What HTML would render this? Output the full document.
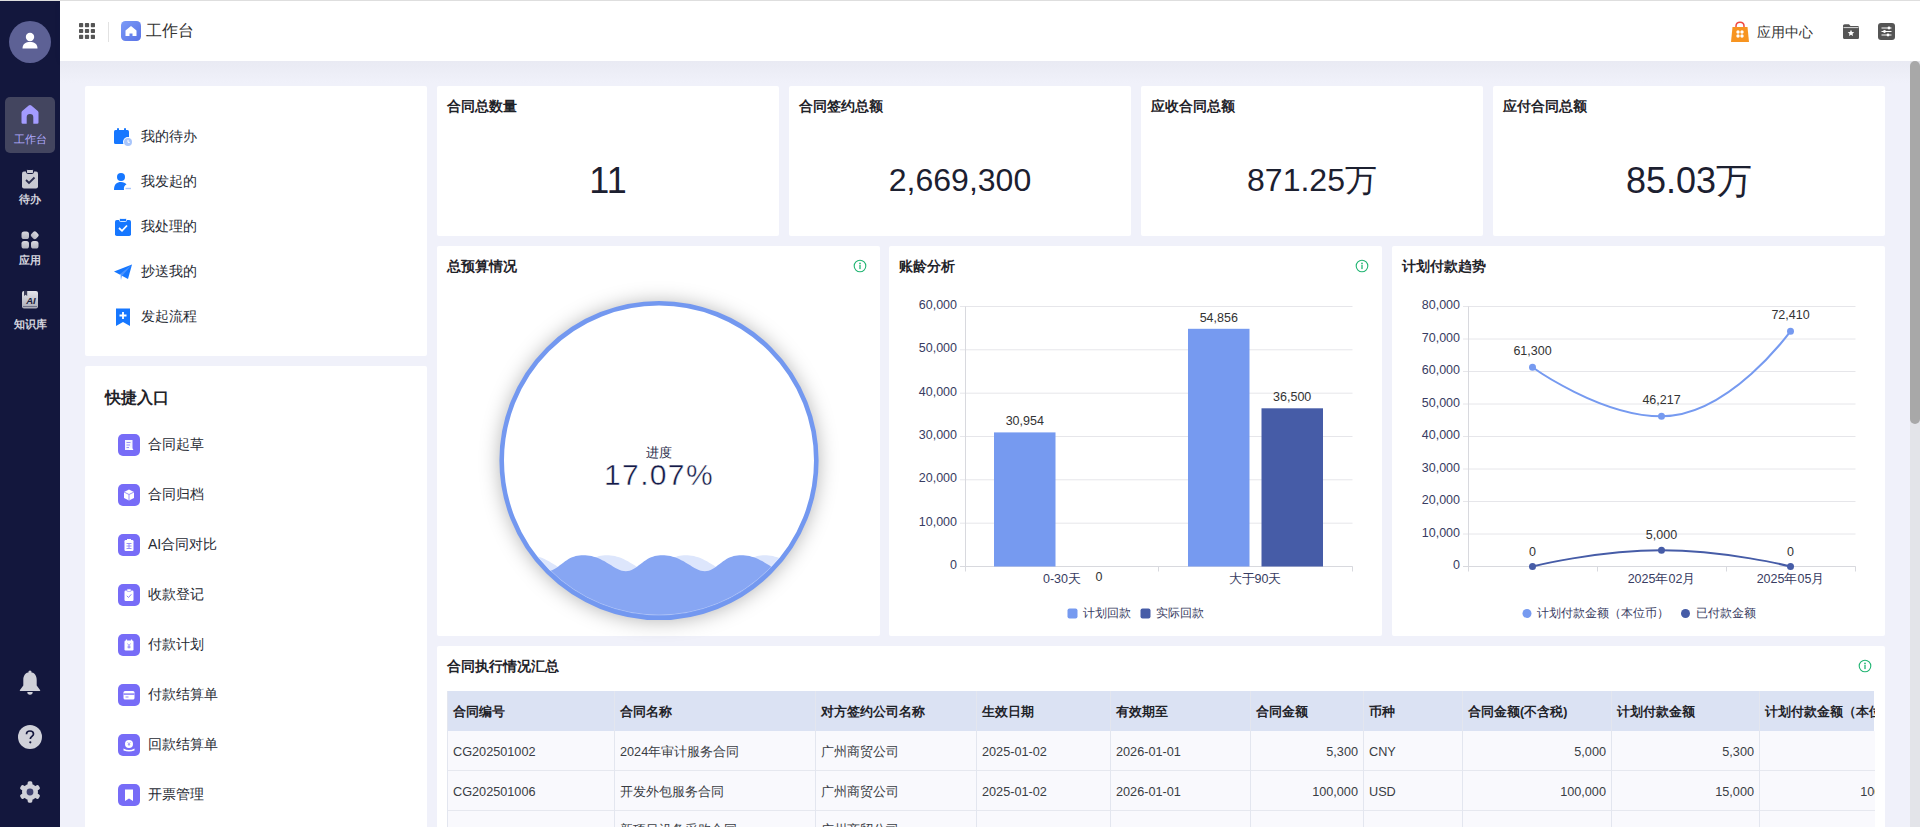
<!DOCTYPE html>
<html><head><meta charset="utf-8"><title>工作台</title>
<style>
*{box-sizing:border-box;margin:0;padding:0}
html,body{width:1920px;height:827px;overflow:hidden;background:#f0f1fa;font-family:"Liberation Sans",sans-serif;color:#1f2329}
.abs{position:absolute}
#side{position:absolute;left:0;top:0;width:60px;height:827px;background:#13173d}
#side .av{position:absolute;left:9px;top:21px;width:42px;height:42px;border-radius:50%;background:#5d6195}
#side .nav{position:absolute;left:0;width:60px;text-align:center;font-size:11px;font-weight:bold;color:#d3d4de}
#side .act{position:absolute;left:5px;top:97px;width:50px;height:56px;border-radius:5px;background:#43455f}
#top{position:absolute;left:60px;top:0;width:1860px;height:61px;background:#fff;border-top:1px solid #dedede;box-shadow:0 1px 6px rgba(40,50,90,0.06)}
.card{position:absolute;background:#fff;border-radius:2px}
.ct{position:absolute;left:10px;top:12px;font-size:13.5px;font-weight:bold;color:#1f2329}
.num{position:absolute;left:0;right:0;top:76px;text-align:center;font-size:32px;color:#1c2030}
.li{position:absolute;left:28px;height:20px;display:flex;align-items:center}
.li svg{flex:none}
.li span{margin-left:8px;font-size:14px;color:#262a33}
.qi{position:absolute;left:33px;height:22px;display:flex;align-items:center}
.qi svg{flex:none}
.qi span{margin-left:8px;font-size:14px;color:#262a33}
.th{position:absolute;top:1px;height:39px;line-height:41px;padding-left:6px;font-size:12.5px;font-weight:bold;color:#1f2329;white-space:nowrap;overflow:hidden}
.tr{position:absolute;left:0;width:1428px;height:40px;background:#f9f9fd;border-bottom:1px solid #e6e8ef}
.td{position:absolute;height:40px;line-height:42px;padding-left:6px;padding-right:5px;font-size:12.7px;color:#3a3d44;white-space:nowrap;overflow:hidden}
.td.r{text-align:right}
.vl{position:absolute;top:0;width:1px;height:200px;background:#e3e6ef}
</style></head><body>
<div id="side">
  <div class="av"></div>
  <svg class="abs" style="left:20px;top:31px" width="20" height="20" viewBox="0 0 20 20"><circle cx="10" cy="6" r="4.2" fill="#fff"/><path d="M2.5 17.5 C2.5 12.5 6 11 10 11 C14 11 17.5 12.5 17.5 17.5 Z" fill="#fff"/></svg>
  <div class="act"></div>
  <svg class="abs" style="left:20px;top:104px" width="20" height="21" viewBox="0 0 20 21"><path d="M1.5 8.6 Q1.5 7.7 2.2 7.1 L8.7 1.6 Q10 0.6 11.3 1.6 L17.8 7.1 Q18.5 7.7 18.5 8.6 V18.5 Q18.5 19.8 17.2 19.8 H13.3 V13.2 A3.3 3.3 0 0 0 6.7 13.2 V19.8 H2.8 Q1.5 19.8 1.5 18.5 Z" fill="#a39bff"/></svg>
  <div class="nav" style="top:132px;color:#b0aaff;font-weight:normal">工作台</div>
  <svg class="abs" style="left:21px;top:169px" width="18" height="20" viewBox="0 0 18 20"><rect x="1" y="2.5" width="16" height="17" rx="2" fill="#c9cad3"/><rect x="5.5" y="0.5" width="7" height="4" rx="1.2" fill="#c9cad3" stroke="#13173d" stroke-width="1"/><path d="M5 11 L8 14 L13.5 8.5" stroke="#2a2d4f" stroke-width="1.8" fill="none"/></svg>
  <div class="nav" style="top:192px">待办</div>
  <svg class="abs" style="left:21px;top:231px" width="18" height="18" viewBox="0 0 18 18"><defs><linearGradient id="gg" x1="0" y1="0" x2="0" y2="1"><stop offset="0" stop-color="#d9d9e0"/><stop offset="1" stop-color="#b4b5c0"/></linearGradient></defs><rect x="0.5" y="0.5" width="7.5" height="7.5" rx="2.6" fill="url(#gg)"/><rect x="10.4" y="0.9" width="6.7" height="6.7" rx="2.2" fill="url(#gg)" transform="rotate(45 13.75 4.25)"/><rect x="0.5" y="10" width="7.5" height="7.5" rx="2.6" fill="url(#gg)"/><rect x="10" y="10" width="7.5" height="7.5" rx="2.6" fill="url(#gg)"/></svg>
  <div class="nav" style="top:253px">应用</div>
  <svg class="abs" style="left:21px;top:290px" width="18" height="19" viewBox="0 0 18 19"><defs><linearGradient id="bg2" x1="0" y1="0" x2="0" y2="1"><stop offset="0" stop-color="#e4e4ea"/><stop offset="1" stop-color="#a9aab6"/></linearGradient></defs><rect x="1" y="1" width="16" height="17.5" rx="2" fill="url(#bg2)"/><path d="M3 0.8 V6 L4.6 4.8 L6.2 6 V0.8 Z" fill="#3a3c58"/><rect x="2" y="16" width="14" height="1" fill="#6e7088"/><text x="10" y="14.2" font-size="9.5" font-weight="bold" font-style="italic" fill="#1c1e3c" text-anchor="middle">AI</text></svg>
  <div class="nav" style="top:317px">知识库</div>
  <svg class="abs" style="left:19px;top:670px" width="22" height="26" viewBox="0 0 22 26"><circle cx="11" cy="2" r="1.6" fill="#d0d1d9"/><path d="M11 2.2 C6.3 2.2 4.3 5.8 4.3 9.8 V15.5 L0.8 20.2 Q0.5 21 1.4 21 H20.6 Q21.5 21 21.2 20.2 L17.7 15.5 V9.8 C17.7 5.8 15.7 2.2 11 2.2 Z" fill="#d0d1d9"/><path d="M8.3 22 A2.7 2.7 0 0 0 13.7 22 Z" fill="#d0d1d9"/></svg>
  <svg class="abs" style="left:18px;top:725px" width="24" height="24" viewBox="0 0 24 24"><circle cx="12" cy="12" r="12" fill="#d0d1d9"/><path d="M8.5 9.3 C8.5 7.2 10 6 12 6 C14 6 15.5 7.2 15.5 9 C15.5 11.3 12.3 11.5 12.3 14" stroke="#13173d" stroke-width="1.7" fill="none"/><circle cx="12.3" cy="17.3" r="1.1" fill="#13173d"/></svg>
  <svg class="abs" style="left:19px;top:780.5px" width="22" height="22" viewBox="0 0 22 22"><circle cx="11" cy="11" r="8" fill="#d0d1d9"/><rect x="8.6" y="0.3" width="4.8" height="6" rx="1.6" fill="#d0d1d9" transform="rotate(0 11 11)"/><rect x="8.6" y="0.3" width="4.8" height="6" rx="1.6" fill="#d0d1d9" transform="rotate(60 11 11)"/><rect x="8.6" y="0.3" width="4.8" height="6" rx="1.6" fill="#d0d1d9" transform="rotate(120 11 11)"/><rect x="8.6" y="0.3" width="4.8" height="6" rx="1.6" fill="#d0d1d9" transform="rotate(180 11 11)"/><rect x="8.6" y="0.3" width="4.8" height="6" rx="1.6" fill="#d0d1d9" transform="rotate(240 11 11)"/><rect x="8.6" y="0.3" width="4.8" height="6" rx="1.6" fill="#d0d1d9" transform="rotate(300 11 11)"/><circle cx="11" cy="11" r="3.4" fill="#3f4270"/></svg>
</div>
<div id="top">
  <svg class="abs" style="left:19px;top:22px" width="16" height="16" viewBox="0 0 16 16" fill="#555"><rect x="0" y="0" width="4.2" height="4.2" rx="0.8"/><rect x="5.9" y="0" width="4.2" height="4.2" rx="0.8"/><rect x="11.8" y="0" width="4.2" height="4.2" rx="0.8"/><rect x="0" y="5.9" width="4.2" height="4.2" rx="0.8"/><rect x="5.9" y="5.9" width="4.2" height="4.2" rx="0.8"/><rect x="11.8" y="5.9" width="4.2" height="4.2" rx="0.8"/><rect x="0" y="11.8" width="4.2" height="4.2" rx="0.8"/><rect x="5.9" y="11.8" width="4.2" height="4.2" rx="0.8"/><rect x="11.8" y="11.8" width="4.2" height="4.2" rx="0.8"/></svg>
  <div class="abs" style="left:48px;top:21px;width:1px;height:20px;background:#e2e2e2"></div>
  <svg class="abs" style="left:61px;top:20px" width="20" height="20" viewBox="0 0 20 20"><defs><linearGradient id="hg" x1="0" y1="0" x2="1" y2="1"><stop offset="0" stop-color="#7b9bf7"/><stop offset="1" stop-color="#5a73e6"/></linearGradient></defs><rect width="20" height="20" rx="4.5" fill="url(#hg)"/><path d="M4.5 9.5 L10 5 L15.5 9.5 V15 H11.5 V12.5 H8.5 V15 H4.5 Z" fill="#fff"/></svg>
  <div class="abs" style="left:86px;top:20px;font-size:16px;color:#333;line-height:20px">工作台</div>
  <svg class="abs" style="left:1670px;top:20px" width="20" height="22" viewBox="0 0 20 22"><path d="M6 7 V5 C6 2.5 7.8 1.2 10 1.2 C12.2 1.2 14 2.5 14 5 V7" stroke="#f0483e" stroke-width="1.5" fill="none"/><path d="M2.5 6 H17.5 L19 21 H1 Z" fill="#f79420"/><circle cx="8" cy="11" r="1.7" fill="#fff"/><circle cx="12" cy="11" r="1.7" fill="#fff"/><circle cx="8" cy="15" r="1.7" fill="#fff"/><circle cx="12" cy="15" r="1.7" fill="#fff"/></svg>
  <div class="abs" style="left:1697px;top:23px;font-size:13.5px;color:#333;line-height:18px">应用中心</div>
  <svg class="abs" style="left:1782px;top:22px" width="18" height="17" viewBox="0 0 18 17"><path d="M1 3 C1 2 1.7 1.2 2.7 1.2 H7 L8.5 3 H15.5 C16.5 3 17 3.7 17 4.5 V14.5 C17 15.5 16.3 16 15.5 16 H2.5 C1.5 16 1 15.3 1 14.5 Z" fill="#555"/><path d="M1.5 4.6 H16.5" stroke="#fff" stroke-width="0.8"/><path d="M9 6.8 L10 9 L12.3 9.2 L10.5 10.7 L11.1 13 L9 11.7 L6.9 13 L7.5 10.7 L5.7 9.2 L8 9 Z" fill="#fff"/></svg>
  <svg class="abs" style="left:1818px;top:22px" width="17" height="17" viewBox="0 0 17 17"><rect width="17" height="17" rx="3" fill="#555"/><path d="M3.5 5 H13.5 M3.5 8.5 H13.5 M3.5 12 H13.5" stroke="#fff" stroke-width="1"/><circle cx="11" cy="5" r="1.4" fill="#fff"/><circle cx="6.5" cy="8.5" r="1.4" fill="#fff"/><circle cx="10" cy="12" r="1.4" fill="#fff"/></svg>
</div>
<div class="abs" style="left:0;top:0;width:1920px;height:1px;background:#dedede"></div>
<div class="abs" style="left:60px;top:61px;width:1850px;height:22px;background:linear-gradient(#e9eaf3,#f0f1fa)"></div>
<!-- scrollbar -->
<div class="abs" style="left:1910px;top:61px;width:10px;height:766px;background:#e3e4e9"></div>
<div class="abs" style="left:1910px;top:61px;width:10px;height:363px;background:#a8a8a8;border-radius:5px 5px 5px 5px"></div>

<!-- left panels -->
<div class="card" style="left:85px;top:86px;width:342px;height:270px"><div class="li" style="top:41px"><svg width="20" height="20" viewBox="0 0 20 20"><rect x="1" y="3" width="15" height="14" rx="1.5" fill="#1677ff"/><rect x="4" y="1" width="2" height="4" rx="1" fill="#1677ff"/><rect x="11" y="1" width="2" height="4" rx="1" fill="#1677ff"/><circle cx="15" cy="15" r="5" fill="#fff"/><circle cx="15" cy="15" r="4" fill="#a9c6fb"/><path d="M15 12.8V15.3H16.8" stroke="#fff" stroke-width="1" fill="none"/></svg><span>我的待办</span></div><div class="li" style="top:86px"><svg width="20" height="20" viewBox="0 0 20 20"><circle cx="8" cy="5" r="4" fill="#1677ff"/><path d="M1 18 C1 12 4 10 8 10 C10.5 10 12.5 11 13.5 12.5 C11.5 13.2 10.5 15.5 11 18 Z" fill="#1677ff"/><path d="M12.5 16.5 H18" stroke="#a9c6fb" stroke-width="1.4"/></svg><span>我发起的</span></div><div class="li" style="top:131px"><svg width="20" height="20" viewBox="0 0 20 20"><rect x="2" y="3" width="16" height="16" rx="1.8" fill="#1677ff"/><rect x="6.5" y="1.5" width="7" height="3" rx="1" fill="#1677ff" stroke="#fff" stroke-width="0.8"/><path d="M6 11 L9 13.8 L14 8.5" stroke="#fff" stroke-width="1.8" fill="none"/></svg><span>我处理的</span></div><div class="li" style="top:176px"><svg width="20" height="20" viewBox="0 0 20 20"><path d="M1 9.5 L19 2.5 L15 17 Z" fill="#1677ff"/><path d="M7 12 L19 2.5 L9 14 L8 18 Z" fill="#4b93ff"/><path d="M7.5 12.5 L8.2 17.5" stroke="#fff" stroke-width="0.6"/></svg><span>抄送我的</span></div><div class="li" style="top:221px"><svg width="20" height="20" viewBox="0 0 20 20"><path d="M3 1.5 H17 V19 L10 15 L3 19 Z" fill="#1677ff"/><path d="M10 5 V12 M6.5 8.5 H13.5" stroke="#fff" stroke-width="1.8"/></svg><span>发起流程</span></div></div>
<div class="card" style="left:85px;top:366px;width:342px;height:470px">
  <div class="abs" style="left:20px;top:22px;font-size:16px;font-weight:bold;color:#1f2329">快捷入口</div>
  <div class="qi" style="top:68px"><svg width="22" height="22" viewBox="0 0 22 22"><rect width="22" height="22" rx="5" fill="#776cf7"/><rect x="7" y="6" width="7.5" height="10" fill="#fff" opacity="0.92"/><path d="M8.5 8.5h4M8.5 11h3.5M8.5 13.5h2.5" stroke="#8f86f8" stroke-width="0.9"/><path d="M13 13l2.5 3h-5z" fill="#fff"/></svg><span>合同起草</span></div><div class="qi" style="top:118px"><svg width="22" height="22" viewBox="0 0 22 22"><rect width="22" height="22" rx="5" fill="#776cf7"/><path d="M11 5.5 L16 8 V14 L11 16.5 L6 14 V8 Z" fill="#fff"/><path d="M6 8 L11 10.5 L16 8 M11 10.5 V16.5" stroke="#8f86f8" stroke-width="0.9" fill="none"/></svg><span>合同归档</span></div><div class="qi" style="top:168px"><svg width="22" height="22" viewBox="0 0 22 22"><rect width="22" height="22" rx="5" fill="#776cf7"/><rect x="6.5" y="6" width="9" height="11" rx="1.2" fill="#fff"/><path d="M8.5 9.5h5M8.5 12h5M8.5 14.5h5M11 9.5v5" stroke="#8f86f8" stroke-width="0.9"/><rect x="9" y="5" width="4" height="2" fill="#fff"/></svg><span>AI合同对比</span></div><div class="qi" style="top:218px"><svg width="22" height="22" viewBox="0 0 22 22"><rect width="22" height="22" rx="5" fill="#776cf7"/><rect x="6.5" y="6.5" width="9" height="10.5" rx="1.2" fill="#fff"/><rect x="9" y="5" width="4" height="2.5" rx="0.6" fill="#fff" stroke="#8f86f8" stroke-width="0.6"/><path d="M8.8 11.8 L10.5 13.5 L13.3 10.3" stroke="#8f86f8" stroke-width="1" fill="none"/></svg><span>收款登记</span></div><div class="qi" style="top:268px"><svg width="22" height="22" viewBox="0 0 22 22"><rect width="22" height="22" rx="5" fill="#776cf7"/><rect x="6.5" y="6.5" width="9" height="10" rx="1.2" fill="#fff"/><path d="M8.5 5.5v2.5M13.5 5.5v2.5" stroke="#fff" stroke-width="1.2"/><path d="M9.5 9.5 L11 11.5 L12.5 9.5 M11 11.5 V14.5 M9.5 12.3 H12.5 M9.5 13.6 H12.5" stroke="#8f86f8" stroke-width="0.8" fill="none"/></svg><span>付款计划</span></div><div class="qi" style="top:318px"><svg width="22" height="22" viewBox="0 0 22 22"><rect width="22" height="22" rx="5" fill="#776cf7"/><rect x="5.5" y="7" width="11" height="8.5" rx="1.5" fill="#fff"/><rect x="5.5" y="9.3" width="11" height="1.6" fill="#8f86f8"/><rect x="7.5" y="12.5" width="3" height="1" fill="#8f86f8"/></svg><span>付款结算单</span></div><div class="qi" style="top:368px"><svg width="22" height="22" viewBox="0 0 22 22"><rect width="22" height="22" rx="5" fill="#776cf7"/><circle cx="11" cy="10" r="4" fill="#fff"/><path d="M9.6 8.2 L11 10 L12.4 8.2 M11 10 V12 M9.8 10.5 H12.2" stroke="#8f86f8" stroke-width="0.7" fill="none"/><path d="M5.5 14.5 Q11 17.5 16.5 14.5 V16.5 Q11 18.5 5.5 16.5 Z" fill="#fff"/></svg><span>回款结算单</span></div><div class="qi" style="top:418px"><svg width="22" height="22" viewBox="0 0 22 22"><rect width="22" height="22" rx="5" fill="#776cf7"/><path d="M7 5.5 H15 V17 L11 14.5 L7 17 Z" fill="#fff"/></svg><span>开票管理</span></div>
</div>

<!-- stat cards -->
<div class="card" style="left:437px;top:86px;width:342px;height:150px"><div class="ct">合同总数量</div></div>
<div class="card" style="left:789px;top:86px;width:342px;height:150px"><div class="ct">合同签约总额</div></div>
<div class="card" style="left:1141px;top:86px;width:342px;height:150px"><div class="ct">应收合同总额</div></div>
<div class="card" style="left:1493px;top:86px;width:392px;height:150px"><div class="ct">应付合同总额</div></div>

<!-- chart cards -->
<div class="card" style="left:437px;top:246px;width:443px;height:390px"><div class="ct">总预算情况</div><div class="abs" style="left:416px;top:13px"><svg width="14" height="14" viewBox="0 0 14 14"><circle cx="7" cy="7" r="5.8" fill="none" stroke="#22b573" stroke-width="1.1"/><circle cx="7" cy="4.4" r="0.85" fill="#22b573"/><rect x="6.35" y="5.9" width="1.3" height="4.2" fill="#22b573"/></svg></div></div>
<div class="card" style="left:889px;top:246px;width:493px;height:390px"><div class="ct">账龄分析</div><div class="abs" style="left:466px;top:13px"><svg width="14" height="14" viewBox="0 0 14 14"><circle cx="7" cy="7" r="5.8" fill="none" stroke="#22b573" stroke-width="1.1"/><circle cx="7" cy="4.4" r="0.85" fill="#22b573"/><rect x="6.35" y="5.9" width="1.3" height="4.2" fill="#22b573"/></svg></div></div>
<div class="card" style="left:1392px;top:246px;width:493px;height:390px"><div class="ct">计划付款趋势</div></div>

<!-- table card -->
<div class="card" style="left:437px;top:646px;width:1448px;height:200px">
  <div class="ct" style="top:12px">合同执行情况汇总</div>
  <div class="abs" style="left:1421px;top:13px"><svg width="14" height="14" viewBox="0 0 14 14"><circle cx="7" cy="7" r="5.8" fill="none" stroke="#22b573" stroke-width="1.1"/><circle cx="7" cy="4.4" r="0.85" fill="#22b573"/><rect x="6.35" y="5.9" width="1.3" height="4.2" fill="#22b573"/></svg></div>
  <div class="abs" style="left:10px;top:45px;width:1428px;height:140px;overflow:hidden"><div class="abs" style="left:0;top:0;width:1427px;height:40px;background:#dbe2f3"></div><div class="th" style="left:0px;width:167px">合同编号</div><div class="th" style="left:167px;width:201px">合同名称</div><div class="th" style="left:368px;width:161px">对方签约公司名称</div><div class="th" style="left:529px;width:134px">生效日期</div><div class="th" style="left:663px;width:140px">有效期至</div><div class="th" style="left:803px;width:113px">合同金额</div><div class="th" style="left:916px;width:99px">币种</div><div class="th" style="left:1015px;width:149px">合同金额(不含税)</div><div class="th" style="left:1164px;width:148px">计划付款金额</div><div class="th" style="left:1312px;width:152px">计划付款金额（本位币）</div><div class="tr" style="top:40px"></div><div class="td" style="left:0px;width:167px;top:40px">CG202501002</div><div class="td" style="left:167px;width:201px;top:40px">2024年审计服务合同</div><div class="td" style="left:368px;width:161px;top:40px">广州商贸公司</div><div class="td" style="left:529px;width:134px;top:40px">2025-01-02</div><div class="td" style="left:663px;width:140px;top:40px">2026-01-01</div><div class="td r" style="left:803px;width:113px;top:40px">5,300</div><div class="td" style="left:916px;width:99px;top:40px">CNY</div><div class="td r" style="left:1015px;width:149px;top:40px">5,000</div><div class="td r" style="left:1164px;width:148px;top:40px">5,300</div><div class="tr" style="top:80px"></div><div class="td" style="left:0px;width:167px;top:80px">CG202501006</div><div class="td" style="left:167px;width:201px;top:80px">开发外包服务合同</div><div class="td" style="left:368px;width:161px;top:80px">广州商贸公司</div><div class="td" style="left:529px;width:134px;top:80px">2025-01-02</div><div class="td" style="left:663px;width:140px;top:80px">2026-01-01</div><div class="td r" style="left:803px;width:113px;top:80px">100,000</div><div class="td" style="left:916px;width:99px;top:80px">USD</div><div class="td r" style="left:1015px;width:149px;top:80px">100,000</div><div class="td r" style="left:1164px;width:148px;top:80px">15,000</div><div class="td r" style="left:1312px;width:152px;top:80px">100,000</div><div class="tr" style="top:120px"></div><div class="td" style="left:167px;width:201px;top:120px;line-height:38px">新项目设备采购合同</div><div class="td" style="left:368px;width:161px;top:120px;line-height:38px">广州商贸公司</div><div class="vl" style="left:0px"></div><div class="vl" style="left:167px"></div><div class="vl" style="left:368px"></div><div class="vl" style="left:529px"></div><div class="vl" style="left:663px"></div><div class="vl" style="left:803px"></div><div class="vl" style="left:916px"></div><div class="vl" style="left:1015px"></div><div class="vl" style="left:1164px"></div><div class="vl" style="left:1312px"></div></div>
</div>

<svg class="abs" style="left:0;top:0;pointer-events:none" width="1920" height="827" font-family="Liberation Sans, sans-serif">
<defs>
<clipPath id="lc"><circle cx="659" cy="460.5" r="155.5"/></clipPath>
<filter id="sh" x="-30%" y="-30%" width="160%" height="160%"><feGaussianBlur stdDeviation="10"/></filter>
</defs>
<circle cx="659" cy="461.5" r="159" fill="rgba(0,0,0,0.3)" filter="url(#sh)"/>
<circle cx="659" cy="460.5" r="158" fill="#fff"/>
<g clip-path="url(#lc)">
<path d="M369.7,555.26 L371.7,555.31 L373.7,555.47 L375.8,555.74 L377.9,556.12 L380.0,556.64 L382.2,557.30 L384.3,558.10 L386.5,559.05 L388.7,560.14 L391.0,561.34 L393.2,562.64 L395.4,564.00 L397.6,565.37 L399.7,566.71 L401.9,567.96 L404.0,569.07 L406.1,569.99 L408.2,570.69 L410.2,571.11 L412.2,571.26 L414.2,571.11 L416.1,570.69 L418.0,569.99 L419.8,569.07 L421.6,567.96 L423.4,566.71 L425.2,565.37 L427.0,564.00 L428.7,562.64 L430.5,561.34 L432.2,560.14 L433.9,559.05 L435.7,558.10 L437.5,557.30 L439.3,556.64 L441.1,556.12 L442.9,555.74 L444.8,555.47 L446.7,555.31 L448.7,555.26 L450.7,555.31 L452.7,555.47 L454.8,555.74 L456.9,556.12 L459.0,556.64 L461.2,557.30 L463.3,558.10 L465.5,559.05 L467.7,560.14 L470.0,561.34 L472.2,562.64 L474.4,564.00 L476.6,565.37 L478.7,566.71 L480.9,567.96 L483.0,569.07 L485.1,569.99 L487.2,570.69 L489.2,571.11 L491.2,571.26 L493.2,571.11 L495.1,570.69 L497.0,569.99 L498.8,569.07 L500.6,567.96 L502.4,566.71 L504.2,565.37 L506.0,564.00 L507.7,562.64 L509.5,561.34 L511.2,560.14 L512.9,559.05 L514.7,558.10 L516.5,557.30 L518.3,556.64 L520.1,556.12 L521.9,555.74 L523.8,555.47 L525.7,555.31 L527.7,555.26 L529.7,555.31 L531.7,555.47 L533.8,555.74 L535.9,556.12 L538.0,556.64 L540.2,557.30 L542.3,558.10 L544.5,559.05 L546.7,560.14 L549.0,561.34 L551.2,562.64 L553.4,564.00 L555.6,565.37 L557.7,566.71 L559.9,567.96 L562.0,569.07 L564.1,569.99 L566.2,570.69 L568.2,571.11 L570.2,571.26 L572.2,571.11 L574.1,570.69 L576.0,569.99 L577.8,569.07 L579.6,567.96 L581.4,566.71 L583.2,565.37 L585.0,564.00 L586.7,562.64 L588.5,561.34 L590.2,560.14 L591.9,559.05 L593.7,558.10 L595.5,557.30 L597.3,556.64 L599.1,556.12 L600.9,555.74 L602.8,555.47 L604.7,555.31 L606.7,555.26 L608.7,555.31 L610.7,555.47 L612.8,555.74 L614.9,556.12 L617.0,556.64 L619.2,557.30 L621.3,558.10 L623.5,559.05 L625.7,560.14 L628.0,561.34 L630.2,562.64 L632.4,564.00 L634.6,565.37 L636.7,566.71 L638.9,567.96 L641.0,569.07 L643.1,569.99 L645.2,570.69 L647.2,571.11 L649.2,571.26 L651.2,571.11 L653.1,570.69 L655.0,569.99 L656.8,569.07 L658.6,567.96 L660.4,566.71 L662.2,565.37 L664.0,564.00 L665.7,562.64 L667.5,561.34 L669.2,560.14 L670.9,559.05 L672.7,558.10 L674.5,557.30 L676.3,556.64 L678.1,556.12 L679.9,555.74 L681.8,555.47 L683.7,555.31 L685.7,555.26 L687.7,555.31 L689.7,555.47 L691.8,555.74 L693.9,556.12 L696.0,556.64 L698.2,557.30 L700.3,558.10 L702.5,559.05 L704.7,560.14 L707.0,561.34 L709.2,562.64 L711.4,564.00 L713.6,565.37 L715.7,566.71 L717.9,567.96 L720.0,569.07 L722.1,569.99 L724.2,570.69 L726.2,571.11 L728.2,571.26 L730.2,571.11 L732.1,570.69 L734.0,569.99 L735.8,569.07 L737.6,567.96 L739.4,566.71 L741.2,565.37 L743.0,564.00 L744.7,562.64 L746.5,561.34 L748.2,560.14 L749.9,559.05 L751.7,558.10 L753.5,557.30 L755.3,556.64 L757.1,556.12 L758.9,555.74 L760.8,555.47 L762.7,555.31 L764.7,555.26 L766.7,555.31 L768.7,555.47 L770.8,555.74 L772.9,556.12 L775.0,556.64 L777.2,557.30 L779.3,558.10 L781.5,559.05 L783.7,560.14 L786.0,561.34 L788.2,562.64 L790.4,564.00 L792.6,565.37 L794.7,566.71 L796.9,567.96 L799.0,569.07 L801.1,569.99 L803.2,570.69 L805.2,571.11 L807.2,571.26 L809.2,571.11 L811.1,570.69 L813.0,569.99 L814.8,569.07 L816.6,567.96 L818.4,566.71 L820.2,565.37 L822.0,564.00 L823.7,562.64 L825.5,561.34 L827.2,560.14 L828.9,559.05 L830.7,558.10 L832.5,557.30 L834.3,556.64 L836.1,556.12 L837.9,555.74 L839.8,555.47 L841.7,555.31 L843.7,555.26 L845.7,555.31 L847.7,555.47 L849.8,555.74 L851.9,556.12 L854.0,556.64 L856.2,557.30 L858.3,558.10 L860.5,559.05 L862.7,560.14 L865.0,561.34 L867.2,562.64 L869.4,564.00 L871.6,565.37 L873.7,566.71 L875.9,567.96 L878.0,569.07 L880.1,569.99 L882.2,570.69 L884.2,571.11 L886.2,571.26 L888.2,571.11 L890.1,570.69 L892.0,569.99 L893.8,569.07 L895.6,567.96 L897.4,566.71 L899.2,565.37 L901.0,564.00 L902.7,562.64 L904.5,561.34 L906.2,560.14 L907.9,559.05 L909.7,558.10 L911.5,557.30 L913.3,556.64 L915.1,556.12 L916.9,555.74 L918.8,555.47 L920.7,555.31 L903,640 L416,640 Z" fill="#dde6fc"/>
<path d="M346.3,555.26 L348.3,555.31 L350.3,555.47 L352.4,555.74 L354.5,556.12 L356.6,556.64 L358.8,557.30 L360.9,558.10 L363.1,559.05 L365.3,560.14 L367.6,561.34 L369.8,562.64 L372.0,564.00 L374.2,565.37 L376.3,566.71 L378.5,567.96 L380.6,569.07 L382.7,569.99 L384.8,570.69 L386.8,571.11 L388.8,571.26 L390.8,571.11 L392.7,570.69 L394.6,569.99 L396.4,569.07 L398.2,567.96 L400.0,566.71 L401.8,565.37 L403.6,564.00 L405.3,562.64 L407.1,561.34 L408.8,560.14 L410.5,559.05 L412.3,558.10 L414.1,557.30 L415.9,556.64 L417.7,556.12 L419.5,555.74 L421.4,555.47 L423.3,555.31 L425.3,555.26 L427.3,555.31 L429.3,555.47 L431.4,555.74 L433.5,556.12 L435.6,556.64 L437.8,557.30 L439.9,558.10 L442.1,559.05 L444.3,560.14 L446.6,561.34 L448.8,562.64 L451.0,564.00 L453.2,565.37 L455.3,566.71 L457.5,567.96 L459.6,569.07 L461.7,569.99 L463.8,570.69 L465.8,571.11 L467.8,571.26 L469.8,571.11 L471.7,570.69 L473.6,569.99 L475.4,569.07 L477.2,567.96 L479.0,566.71 L480.8,565.37 L482.6,564.00 L484.3,562.64 L486.1,561.34 L487.8,560.14 L489.5,559.05 L491.3,558.10 L493.1,557.30 L494.9,556.64 L496.7,556.12 L498.5,555.74 L500.4,555.47 L502.3,555.31 L504.3,555.26 L506.3,555.31 L508.3,555.47 L510.4,555.74 L512.5,556.12 L514.6,556.64 L516.8,557.30 L518.9,558.10 L521.1,559.05 L523.3,560.14 L525.6,561.34 L527.8,562.64 L530.0,564.00 L532.2,565.37 L534.3,566.71 L536.5,567.96 L538.6,569.07 L540.7,569.99 L542.8,570.69 L544.8,571.11 L546.8,571.26 L548.8,571.11 L550.7,570.69 L552.6,569.99 L554.4,569.07 L556.2,567.96 L558.0,566.71 L559.8,565.37 L561.6,564.00 L563.3,562.64 L565.1,561.34 L566.8,560.14 L568.5,559.05 L570.3,558.10 L572.1,557.30 L573.9,556.64 L575.7,556.12 L577.5,555.74 L579.4,555.47 L581.3,555.31 L583.3,555.26 L585.3,555.31 L587.3,555.47 L589.4,555.74 L591.5,556.12 L593.6,556.64 L595.8,557.30 L597.9,558.10 L600.1,559.05 L602.3,560.14 L604.6,561.34 L606.8,562.64 L609.0,564.00 L611.2,565.37 L613.3,566.71 L615.5,567.96 L617.6,569.07 L619.7,569.99 L621.8,570.69 L623.8,571.11 L625.8,571.26 L627.8,571.11 L629.7,570.69 L631.6,569.99 L633.4,569.07 L635.2,567.96 L637.0,566.71 L638.8,565.37 L640.6,564.00 L642.3,562.64 L644.1,561.34 L645.8,560.14 L647.5,559.05 L649.3,558.10 L651.1,557.30 L652.9,556.64 L654.7,556.12 L656.5,555.74 L658.4,555.47 L660.3,555.31 L662.3,555.26 L664.3,555.31 L666.3,555.47 L668.4,555.74 L670.5,556.12 L672.6,556.64 L674.8,557.30 L676.9,558.10 L679.1,559.05 L681.3,560.14 L683.6,561.34 L685.8,562.64 L688.0,564.00 L690.2,565.37 L692.3,566.71 L694.5,567.96 L696.6,569.07 L698.7,569.99 L700.8,570.69 L702.8,571.11 L704.8,571.26 L706.8,571.11 L708.7,570.69 L710.6,569.99 L712.4,569.07 L714.2,567.96 L716.0,566.71 L717.8,565.37 L719.6,564.00 L721.3,562.64 L723.1,561.34 L724.8,560.14 L726.5,559.05 L728.3,558.10 L730.1,557.30 L731.9,556.64 L733.7,556.12 L735.5,555.74 L737.4,555.47 L739.3,555.31 L741.3,555.26 L743.3,555.31 L745.3,555.47 L747.4,555.74 L749.5,556.12 L751.6,556.64 L753.8,557.30 L755.9,558.10 L758.1,559.05 L760.3,560.14 L762.6,561.34 L764.8,562.64 L767.0,564.00 L769.2,565.37 L771.3,566.71 L773.5,567.96 L775.6,569.07 L777.7,569.99 L779.8,570.69 L781.8,571.11 L783.8,571.26 L785.8,571.11 L787.7,570.69 L789.6,569.99 L791.4,569.07 L793.2,567.96 L795.0,566.71 L796.8,565.37 L798.6,564.00 L800.3,562.64 L802.1,561.34 L803.8,560.14 L805.5,559.05 L807.3,558.10 L809.1,557.30 L810.9,556.64 L812.7,556.12 L814.5,555.74 L816.4,555.47 L818.3,555.31 L820.3,555.26 L822.3,555.31 L824.3,555.47 L826.4,555.74 L828.5,556.12 L830.6,556.64 L832.8,557.30 L834.9,558.10 L837.1,559.05 L839.3,560.14 L841.6,561.34 L843.8,562.64 L846.0,564.00 L848.2,565.37 L850.3,566.71 L852.5,567.96 L854.6,569.07 L856.7,569.99 L858.8,570.69 L860.8,571.11 L862.8,571.26 L864.8,571.11 L866.7,570.69 L868.6,569.99 L870.4,569.07 L872.2,567.96 L874.0,566.71 L875.8,565.37 L877.6,564.00 L879.3,562.64 L881.1,561.34 L882.8,560.14 L884.5,559.05 L886.3,558.10 L888.1,557.30 L889.9,556.64 L891.7,556.12 L893.5,555.74 L895.4,555.47 L897.3,555.31 L899.3,555.26 L901.3,555.31 L903.3,555.47 L905.4,555.74 L907.5,556.12 L909.6,556.64 L911.8,557.30 L913.9,558.10 L916.1,559.05 L918.3,560.14 L920.6,561.34 L922.8,562.64 L925.0,564.00 L927.2,565.37 L929.3,566.71 L931.5,567.96 L933.6,569.07 L935.7,569.99 L937.8,570.69 L939.8,571.11 L941.8,571.26 L943.8,571.11 L945.7,570.69 L947.6,569.99 L949.4,569.07 L951.2,567.96 L953.0,566.71 L954.8,565.37 L956.6,564.00 L958.3,562.64 L960.1,561.34 L961.8,560.14 L963.5,559.05 L965.3,558.10 L967.1,557.30 L968.9,556.64 L970.7,556.12 L972.5,555.74 L974.4,555.47 L976.3,555.31 L903,640 L416,640 Z" fill="#87a6f3"/>
</g>
<circle cx="659" cy="460.5" r="154.6" fill="none" stroke="rgba(255,255,255,0.35)" stroke-width="0.9"/>
<circle cx="659" cy="460.5" r="157.3" fill="none" stroke="#7398f0" stroke-width="4.6"/>
<text x="659" y="457" text-anchor="middle" font-size="13" fill="#2a2d4a">进度</text>
<text x="659" y="485" text-anchor="middle" font-size="30" fill="#141a48" stroke="#fff" stroke-width="0.45" letter-spacing="1.35">17.07%</text>

<line x1="960" y1="566.5" x2="1352.5" y2="566.5" stroke="#e6e6ea" stroke-width="1"/>
<text x="957" y="569.1" text-anchor="end" font-size="12.5" fill="#383c62">0</text>
<line x1="960" y1="523.2" x2="1352.5" y2="523.2" stroke="#e6e6ea" stroke-width="1"/>
<text x="957" y="525.8" text-anchor="end" font-size="12.5" fill="#383c62">10,000</text>
<line x1="960" y1="479.8" x2="1352.5" y2="479.8" stroke="#e6e6ea" stroke-width="1"/>
<text x="957" y="482.4" text-anchor="end" font-size="12.5" fill="#383c62">20,000</text>
<line x1="960" y1="436.5" x2="1352.5" y2="436.5" stroke="#e6e6ea" stroke-width="1"/>
<text x="957" y="439.1" text-anchor="end" font-size="12.5" fill="#383c62">30,000</text>
<line x1="960" y1="393.2" x2="1352.5" y2="393.2" stroke="#e6e6ea" stroke-width="1"/>
<text x="957" y="395.8" text-anchor="end" font-size="12.5" fill="#383c62">40,000</text>
<line x1="960" y1="349.8" x2="1352.5" y2="349.8" stroke="#e6e6ea" stroke-width="1"/>
<text x="957" y="352.4" text-anchor="end" font-size="12.5" fill="#383c62">50,000</text>
<line x1="960" y1="306.5" x2="1352.5" y2="306.5" stroke="#e6e6ea" stroke-width="1"/>
<text x="957" y="309.1" text-anchor="end" font-size="12.5" fill="#383c62">60,000</text>
<line x1="965.5" y1="306.5" x2="965.5" y2="566.5" stroke="#d8d9de"/>
<line x1="960" y1="566.5" x2="1352.5" y2="566.5" stroke="#d8d9de"/>
<line x1="965.5" y1="566.5" x2="965.5" y2="571.5" stroke="#d8d9de"/>
<line x1="1158.5" y1="566.5" x2="1158.5" y2="571.5" stroke="#d8d9de"/>
<line x1="1352.5" y1="566.5" x2="1352.5" y2="571.5" stroke="#d8d9de"/>
<rect x="994" y="432.4" width="61.5" height="134.1" fill="#769af0"/>
<text x="1024.8" y="425.4" text-anchor="middle" font-size="12.5" fill="#333">30,954</text>
<rect x="1188" y="328.8" width="61.5" height="237.7" fill="#769af0"/>
<text x="1218.8" y="321.8" text-anchor="middle" font-size="12.5" fill="#333">54,856</text>
<rect x="1261.5" y="408.3" width="61.5" height="158.2" fill="#465ca7"/>
<text x="1292.2" y="401.3" text-anchor="middle" font-size="12.5" fill="#333">36,500</text>
<text x="1099" y="581" text-anchor="middle" font-size="12.5" fill="#333">0</text>
<text x="1062" y="583" text-anchor="middle" font-size="12.5" fill="#383c62">0-30天</text>
<text x="1255" y="583" text-anchor="middle" font-size="12.5" fill="#383c62">大于90天</text>
<rect x="1067.5" y="608.5" width="10" height="10" rx="2" fill="#769af0"/>
<text x="1083" y="616.5" font-size="12" fill="#383c62">计划回款</text>
<rect x="1140.5" y="608.5" width="10" height="10" rx="2" fill="#465ca7"/>
<text x="1156" y="616.5" font-size="12" fill="#383c62">实际回款</text>
<line x1="1463" y1="566.5" x2="1855.5" y2="566.5" stroke="#e6e6ea" stroke-width="1"/>
<text x="1460" y="569.1" text-anchor="end" font-size="12.5" fill="#383c62">0</text>
<line x1="1463" y1="534.0" x2="1855.5" y2="534.0" stroke="#e6e6ea" stroke-width="1"/>
<text x="1460" y="536.6" text-anchor="end" font-size="12.5" fill="#383c62">10,000</text>
<line x1="1463" y1="501.5" x2="1855.5" y2="501.5" stroke="#e6e6ea" stroke-width="1"/>
<text x="1460" y="504.1" text-anchor="end" font-size="12.5" fill="#383c62">20,000</text>
<line x1="1463" y1="469.0" x2="1855.5" y2="469.0" stroke="#e6e6ea" stroke-width="1"/>
<text x="1460" y="471.6" text-anchor="end" font-size="12.5" fill="#383c62">30,000</text>
<line x1="1463" y1="436.5" x2="1855.5" y2="436.5" stroke="#e6e6ea" stroke-width="1"/>
<text x="1460" y="439.1" text-anchor="end" font-size="12.5" fill="#383c62">40,000</text>
<line x1="1463" y1="404.0" x2="1855.5" y2="404.0" stroke="#e6e6ea" stroke-width="1"/>
<text x="1460" y="406.6" text-anchor="end" font-size="12.5" fill="#383c62">50,000</text>
<line x1="1463" y1="371.5" x2="1855.5" y2="371.5" stroke="#e6e6ea" stroke-width="1"/>
<text x="1460" y="374.1" text-anchor="end" font-size="12.5" fill="#383c62">60,000</text>
<line x1="1463" y1="339.0" x2="1855.5" y2="339.0" stroke="#e6e6ea" stroke-width="1"/>
<text x="1460" y="341.6" text-anchor="end" font-size="12.5" fill="#383c62">70,000</text>
<line x1="1463" y1="306.5" x2="1855.5" y2="306.5" stroke="#e6e6ea" stroke-width="1"/>
<text x="1460" y="309.1" text-anchor="end" font-size="12.5" fill="#383c62">80,000</text>
<line x1="1468.5" y1="306.5" x2="1468.5" y2="566.5" stroke="#d8d9de"/>
<line x1="1463" y1="566.5" x2="1855.5" y2="566.5" stroke="#d8d9de"/>
<line x1="1468.5" y1="566.5" x2="1468.5" y2="571.5" stroke="#d8d9de"/>
<line x1="1597.5" y1="566.5" x2="1597.5" y2="571.5" stroke="#d8d9de"/>
<line x1="1726.5" y1="566.5" x2="1726.5" y2="571.5" stroke="#d8d9de"/>
<line x1="1855.5" y1="566.5" x2="1855.5" y2="571.5" stroke="#d8d9de"/>
<path d="M1532.50,367.27 C1532.50,367.27 1600.65,416.29 1661.50,416.29 C1729.65,416.29 1790.50,331.17 1790.50,331.17" fill="none" stroke="#769af0" stroke-width="2"/>
<path d="M1532.50,566.50 C1532.50,566.50 1597.00,550.25 1661.50,550.25 C1726.00,550.25 1790.50,566.50 1790.50,566.50" fill="none" stroke="#465ca7" stroke-width="2"/>
<circle cx="1532.5" cy="367.3" r="3.5" fill="#769af0"/>
<circle cx="1661.5" cy="416.3" r="3.5" fill="#769af0"/>
<circle cx="1790.5" cy="331.2" r="3.5" fill="#769af0"/>
<circle cx="1532.5" cy="566.5" r="3.5" fill="#465ca7"/>
<circle cx="1661.5" cy="550.2" r="3.5" fill="#465ca7"/>
<circle cx="1790.5" cy="566.5" r="3.5" fill="#465ca7"/>
<text x="1532.5" y="355.3" text-anchor="middle" font-size="12.5" fill="#333">61,300</text>
<text x="1661.5" y="404.3" text-anchor="middle" font-size="12.5" fill="#333">46,217</text>
<text x="1790.5" y="319.2" text-anchor="middle" font-size="12.5" fill="#333">72,410</text>
<text x="1532.5" y="555.5" text-anchor="middle" font-size="12.5" fill="#333">0</text>
<text x="1661.5" y="539.2" text-anchor="middle" font-size="12.5" fill="#333">5,000</text>
<text x="1790.5" y="555.5" text-anchor="middle" font-size="12.5" fill="#333">0</text>
<text x="1661.5" y="583" text-anchor="middle" font-size="12.5" fill="#383c62">2025年02月</text>
<text x="1790.5" y="583" text-anchor="middle" font-size="12.5" fill="#383c62">2025年05月</text>
<circle cx="1527" cy="613.5" r="4.5" fill="#769af0"/>
<text x="1537" y="616.5" font-size="12" fill="#383c62">计划付款金额（本位币）</text>
<circle cx="1685.5" cy="613.5" r="4.5" fill="#465ca7"/>
<text x="1696" y="616.5" font-size="12" fill="#383c62">已付款金额</text>
<text x="608" y="193" text-anchor="middle" font-size="36" fill="#1c2030">11</text>
<text x="960" y="191" text-anchor="middle" font-size="32" fill="#1c2030">2,669,300</text>
<text x="1312" y="191" text-anchor="middle" font-size="32" fill="#1c2030">871.25万</text>
<text x="1689" y="193" text-anchor="middle" font-size="36" fill="#1c2030">85.03万</text>
</svg>
</body></html>
